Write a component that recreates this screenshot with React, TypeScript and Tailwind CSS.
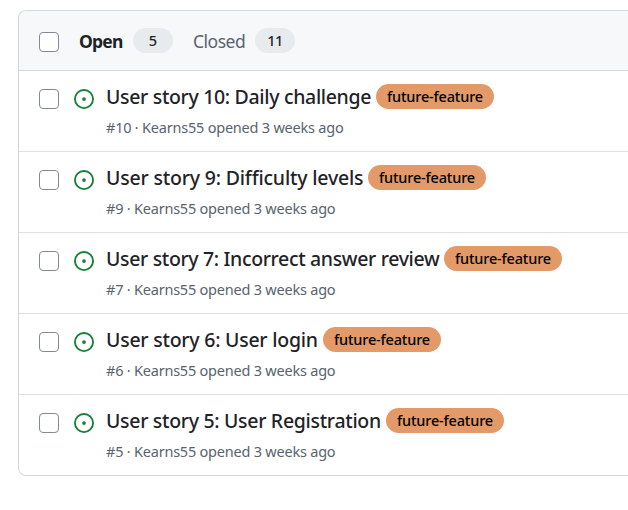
const issues = [
  { id: 10, title: 'User story 10: Daily challenge', fit: 'w-[270px] tracking-[-0.33px]' },
  { id: 9, title: 'User story 9: Difficulty levels', fit: 'w-[262px] tracking-[-0.19px]' },
  { id: 7, title: 'User story 7: Incorrect answer review', fit: 'w-[338px] tracking-[-0.35px]' },
  { id: 6, title: 'User story 6: User login', fit: 'w-[217px] tracking-[-0.24px]' },
  { id: 5, title: 'User story 5: User Registration', fit: 'w-[280px] tracking-[-0.31px]' },
];

function Checkbox() {
  return <span role="checkbox" aria-checked="false" className="block size-5 shrink-0 rounded-[4px] border border-[#818b98] bg-white" />;
}

function OpenIcon() {
  return (
    <svg viewBox="0 0 16 16" className="size-5 shrink-0" fill="#1a7f37">
      <path d="M8 9.5a1.5 1.5 0 1 0 0-3 1.5 1.5 0 0 0 0 3Z" />
      <path d="M8 0a8 8 0 1 1 0 16A8 8 0 0 1 8 0ZM1.5 8a6.5 6.5 0 1 0 13 0 6.5 6.5 0 0 0-13 0Z" />
    </svg>
  );
}

function Issue({ id, title, fit }: (typeof issues)[number]) {
  return (
    <li className="flex h-[81px] items-start border-b border-[#d1d9e0]/80 pl-5 last:border-b-0">
      <div className="mt-[18px] flex gap-[15px]">
        <Checkbox />
        <OpenIcon />
      </div>
      <div className="ml-3 pt-[13px]">
        <div className="flex h-[25px] items-center">
          <h3 className={`shrink-0 whitespace-nowrap text-[19.5px] leading-[25px] font-medium text-[#1f2328] ${fit}`}>{title}</h3>
          <span className="flex h-[25px] w-[118px] items-center justify-center rounded-full bg-[#e49a68] text-[14.5px] font-medium tracking-[-0.17px] text-black">
            <span>future-feature</span>
          </span>
        </div>
        <p className="mt-[8px] whitespace-nowrap text-[14.5px] leading-5 tracking-[-0.22px] text-[#59636e]">#{id} · Kearns55 opened 3 weeks ago</p>
      </div>
    </li>
  );
}

export default function App() {
  return (
    <main className="h-[510px] overflow-hidden bg-white pt-[10px] pl-[18px] font-['Noto_Sans','Open_Sans',sans-serif]">
      <section className="h-[466px] overflow-hidden rounded-l-[8px] border border-r-0 border-[#d1d9e0]">
        <header className="flex h-[60px] items-center border-b border-[#d1d9e0] bg-[#f6f8fa] pl-5 text-[17.5px]">
          <div className="mt-[3px]"><Checkbox /></div>
          <div className="ml-5 w-[54px] whitespace-nowrap pt-[2px] font-bold tracking-[-0.8px] text-[#1f2328]"><span>Open</span></div>
          <span className="flex h-[25px] w-10 items-center justify-center rounded-full bg-[#e7ebee] text-[14.5px] font-medium text-[#1f2328]">5</span>
          <div className="ml-5 w-[62px] whitespace-nowrap pt-[2px] tracking-[-0.5px] text-[#59636e]"><span>Closed</span></div>
          <span className="flex h-[25px] w-10 items-center justify-center rounded-full bg-[#e7ebee] text-[14.5px] font-medium tracking-[-0.5px] text-[#1f2328]">11</span>
        </header>
        <ul>
          {issues.map((issue) => <Issue key={issue.id} {...issue} />)}
        </ul>
      </section>
    </main>
  );
}
